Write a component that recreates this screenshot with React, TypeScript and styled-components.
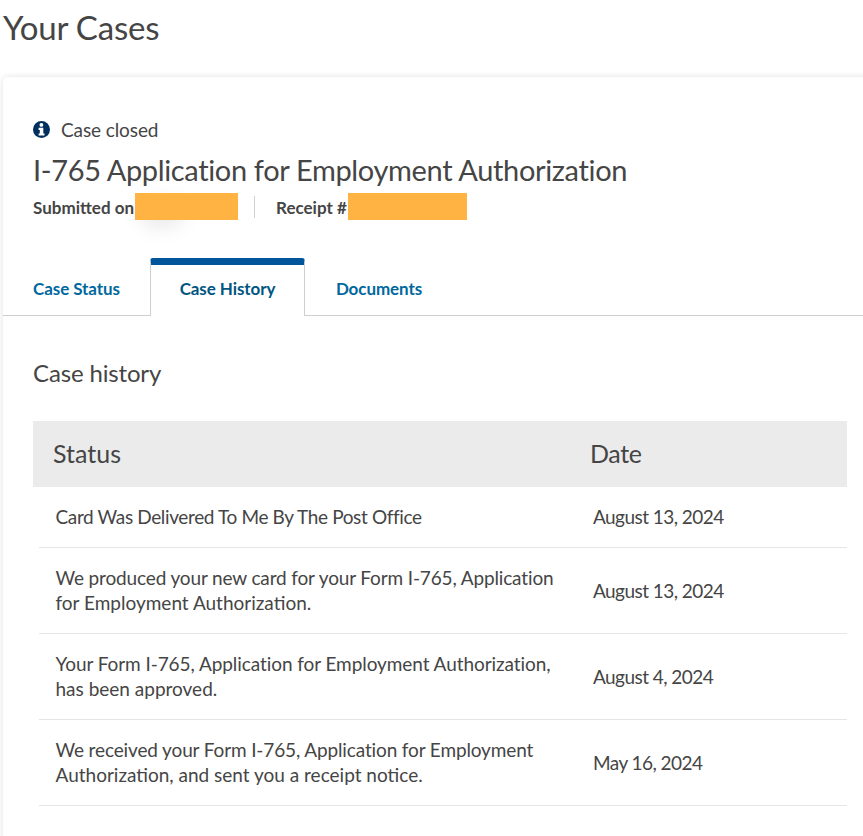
import React from 'react';
import styled, { createGlobalStyle } from 'styled-components';

const GlobalStyle = createGlobalStyle`
    html, body {
        margin: 0;
        padding: 0;
        background: #fff;
        overflow: hidden;
    }
    body {
        font-family: Lato, "Open Sans", "Liberation Sans", sans-serif;
        color: #454545;
    }
`;

const Page = styled.div`
    width: 863px;
    height: 836px;
    overflow: hidden;
    padding-left: 3px;
    box-sizing: border-box;
`;

const PageTitle = styled.h1`
    margin: 0;
    height: 77px;
    padding-top: 6px;
    box-sizing: border-box;
    font-size: 33px;
    line-height: 42px;
    font-weight: 400;
    letter-spacing: -0.2px;
`;

const Card = styled.section`
    width: 880px;
    height: 780px;
    background: #fff;
    border-radius: 5px 0 0 0;
    box-shadow: 0 0 6px rgba(0, 0, 0, 0.12);
`;

const CardHead = styled.header`
    padding: 40px 0 0 30px;
    height: 181px;
    box-sizing: border-box;
`;

const StatusLine = styled.div`
    display: flex;
    align-items: center;
    gap: 11px;
    height: 24px;
    font-size: 19px;
    letter-spacing: -0.1px;
`;

const CaseTitle = styled.h2`
    margin: 9px 0 0;
    font-size: 29px;
    line-height: 40px;
    font-weight: 400;
    letter-spacing: -0.35px;
`;

const Meta = styled.div`
    position: relative;
    display: flex;
    align-items: center;
    height: 27px;
    margin-top: 3px;
    font-size: 17px;
    font-weight: 700;
`;

const MetaLabel = styled.span`
    white-space: nowrap;
    margin-right: 1px;
    padding-top: 2px;
`;

const Redaction = styled.span<{ $width: number }>`
    position: relative;
    flex: none;
    width: ${(p) => p.$width}px;
    height: 27px;
    background: #ffb343;
`;

const Smudge = styled.span`
    position: absolute;
    left: 106px;
    top: 6px;
    width: 46px;
    height: 30px;
    border-radius: 50%;
    background: rgba(0, 0, 0, 0.08);
    filter: blur(9px);
`;

const Divider = styled.span`
    width: 1px;
    height: 22px;
    background: #d0d0d0;
    margin: 0 21px 0 16px;
`;

const TabBar = styled.nav`
    display: flex;
    height: 58px;
    border-bottom: 1px solid #cfcfcf;
    box-sizing: border-box;
`;

const Tab = styled.a<{ $width: number; $active?: boolean }>`
    box-sizing: border-box;
    width: ${(p) => p.$width}px;
    height: ${(p) => (p.$active ? 58 : 57)}px;
    display: flex;
    align-items: center;
    justify-content: center;
    padding-top: ${(p) => (p.$active ? 0 : 3)}px;
    padding-bottom: ${(p) => (p.$active ? 5 : 0)}px;
    font-size: 17px;
    font-weight: 700;
    letter-spacing: -0.08px;
    color: ${(p) => (p.$active ? '#00567f' : '#00689d')};
    background: #fff;
    ${(p) =>
        p.$active &&
        `
        border: 1px solid #cfcfcf;
        border-top: 7px solid #00559b;
        border-bottom: none;
        border-radius: 3px 3px 0 0;
    `}
`;

const Content = styled.div`
    padding: 0 0 0 30px;
`;

const SectionTitle = styled.h3`
    margin: 0;
    height: 105px;
    padding-top: 41px;
    box-sizing: border-box;
    font-size: 24px;
    line-height: 32px;
    font-weight: 400;
    letter-spacing: -0.15px;
`;

const HeadRow = styled.div`
    width: 814px;
    height: 66px;
    display: grid;
    grid-template-columns: 537px 1fr;
    align-items: center;
    padding: 0 0 2px 20px;
    box-sizing: border-box;
    background: #ebebeb;
    font-size: 25px;
`;

const HeadDate = styled.span`
    letter-spacing: -0.4px;
`;

const Row = styled.div<{ $height: number }>`
    width: 808px;
    margin-left: 6px;
    height: ${(p) => p.$height}px;
    display: grid;
    grid-template-columns: 537px 1fr;
    align-items: center;
    padding: 0 0 2px 17px;
    box-sizing: border-box;
    border-bottom: 1px solid #e6e6e6;
    font-size: 19px;
    line-height: 25px;
`;

const StatusLineText = styled.div<{ $spacing: number }>`
    letter-spacing: ${(p) => p.$spacing}px;
    margin-left: -0.5px;
    white-space: nowrap;
`;

const DateText = styled.span<{ $multiline: boolean }>`
    letter-spacing: -0.55px;
    padding-top: ${(p) => (p.$multiline ? 2 : 0)}px;
`;

const rows = [
    { status: ['Card Was Delivered To Me By The Post Office'], date: 'August 13, 2024', height: 61, spacing: -0.37 },
    {
        status: ['We produced your new card for your Form I-765, Application', 'for Employment Authorization.'],
        date: 'August 13, 2024',
        height: 86,
        spacing: -0.14,
    },
    {
        status: ['Your Form I-765, Application for Employment Authorization,', 'has been approved.'],
        date: 'August 4, 2024',
        height: 86,
        spacing: -0.07,
    },
    {
        status: ['We received your Form I-765, Application for Employment', 'Authorization, and sent you a receipt notice.'],
        date: 'May 16, 2024',
        height: 86,
        spacing: -0.13,
    },
];

const InfoIcon = () => (
    <svg width="17" height="17" viewBox="0 0 17 17">
        <circle cx="8.5" cy="8.5" r="8.5" fill="#002f5f" />
        <circle cx="8.4" cy="3.9" r="1.9" fill="#fff" />
        <path d="M5.6 6.8h4.7v5.6h1.2v2.1H5.6v-2.1h1.2V8.9H5.6z" fill="#fff" />
    </svg>
);

const App = () => (
    <Page>
        <GlobalStyle />
        <PageTitle>Your Cases</PageTitle>
        <Card>
            <CardHead>
                <StatusLine>
                    <InfoIcon />
                    Case closed
                </StatusLine>
                <CaseTitle>I-765 Application for Employment Authorization</CaseTitle>
                <Meta>
                    <Smudge />
                    <MetaLabel>Submitted on</MetaLabel>
                    <Redaction $width={103} />
                    <Divider />
                    <MetaLabel>Receipt #</MetaLabel>
                    <Redaction $width={119} />
                </Meta>
            </CardHead>
            <TabBar>
                <Tab $width={147}>Case Status</Tab>
                <Tab $width={155} $active>Case History</Tab>
                <Tab $width={148}>Documents</Tab>
            </TabBar>
            <Content>
                <SectionTitle>Case history</SectionTitle>
                <HeadRow>
                    <span>Status</span>
                    <HeadDate>Date</HeadDate>
                </HeadRow>
                {rows.map((row) => (
                    <Row key={row.status[0]} $height={row.height}>
                        <div>
                            {row.status.map((line, i) => (
                                <StatusLineText key={line} $spacing={i === 0 ? row.spacing : 0}>
                                    {line}
                                </StatusLineText>
                            ))}
                        </div>
                        <DateText $multiline={row.status.length > 1}>{row.date}</DateText>
                    </Row>
                ))}
            </Content>
        </Card>
    </Page>
);

export default App;
